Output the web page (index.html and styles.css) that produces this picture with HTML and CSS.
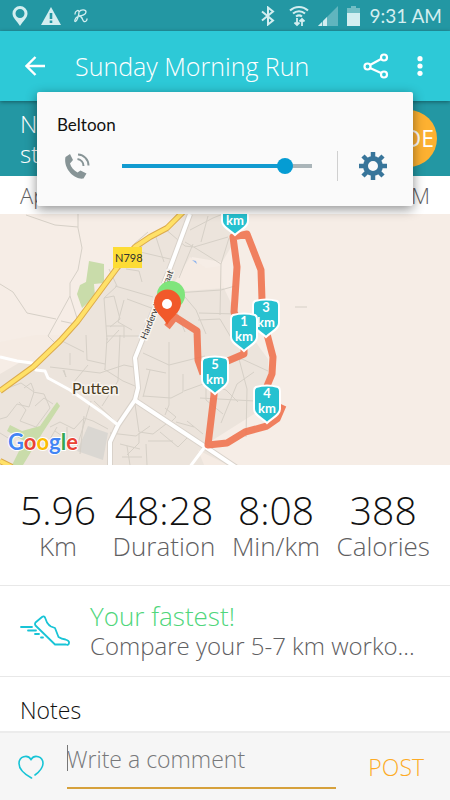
FILE: index.html
```html
<!DOCTYPE html>
<html lang="en">
<head>
  <meta charset="UTF-8">
  <meta name="viewport" content="width=device-width, initial-scale=1.0">
  <title>Sunday Morning Run</title>
  <link rel="stylesheet" href="styles.css">
</head>
<body>

  <!-- status bar -->
  <div class="status-bar">
    <div class="status-icons">
      <svg width="16" height="20" viewBox="0 0 16 20"><path fill="currentColor" fill-rule="evenodd" d="M8 0a7.500 7.500 0 0 0-7.500 7.500C.5 12 5 15 8 20c3-5 7.500-8 7.500-12.500A7.500 7.500 0 0 0 8 0zm0 3a4.500 4.500 0 1 1 0 9 4.500 4.500 0 0 1 0-9z"/></svg>
      <svg width="20" height="18" viewBox="0 0 20 18"><path fill="currentColor" d="M10 0l10 18H0z"/><path stroke="#2397a3" stroke-width="2.600" d="M10 6v6M10 13.500V16"/></svg>
      <svg width="14" height="14" viewBox="0 0 14 14" fill="none" stroke="currentColor" stroke-width="1.300" stroke-linecap="round"><path d="M1 5C1 2 5 0 5 3S3 12 1.500 12.500 1 9 3 8M5 3c2-3 7-2.500 7 0S8 7 5 7c4 0 3 5 5 5.500S13 11 13 10"/></svg>
    </div>
    <div class="status-icons status-right">
      <svg class="bluetooth" width="14" height="20" viewBox="0 0 14 20" fill="none" stroke="currentColor" stroke-width="2"><path d="M1 5.500l11 9-5 4V1.500l5 4-11 9"/></svg>
      <svg width="20" height="22" viewBox="0 0 20 22" fill="none" stroke="currentColor" stroke-width="2"><path d="M1 5.500a13 13 0 0 1 18 0M4 8.500a9 9 0 0 1 12 0M7 11.500a5 5 0 0 1 6 0"/><path stroke-width="1.800" d="M8 13v7M5.500 17.500L8 20l2.500-2.500M13 21v-7M10.500 16.500L13 14l2.500 2.500"/></svg>
      <svg width="20" height="20" viewBox="0 0 20 20" fill="currentColor"><path opacity=".35" d="M20 0v20H0z"/><path d="M9 11v9H5v-5zM4 16v4H0z"/></svg>
      <svg width="13" height="20" viewBox="0 0 13 20" fill="currentColor"><path opacity=".45" d="M4 0h5v2h4v6H0V2h4z"/><path d="M0 7h13v13H0z"/></svg>
      <span class="clock">9:31 AM</span>
    </div>
  </div>

  <header class="app-bar">
    <button class="icon-btn" aria-label="Back">
      <svg width="20" height="20" viewBox="0 0 20 20" fill="none" stroke="currentColor" stroke-width="2.400"><path d="M20 10H2M10.500 1L1.500 10l9 9"/></svg>
    </button>
    <h1>Sunday Morning Run</h1>
    <button class="icon-btn" aria-label="Share">
      <svg width="26" height="26" viewBox="0 0 26 26" fill="none" stroke="currentColor" stroke-width="2.200"><path d="M7 12L18 6M7 15l11 5"/><circle cx="4.500" cy="13.500" r="3"/><circle cx="21" cy="4.500" r="3"/><circle cx="21" cy="21.500" r="3"/></svg>
    </button>
    <button class="icon-btn menu-btn" aria-label="More options">
      <svg width="6" height="20" viewBox="0 0 6 20" fill="currentColor"><circle cx="3" cy="2.700" r="2.600"/><circle cx="3" cy="10" r="2.600"/><circle cx="3" cy="17.300" r="2.600"/></svg>
    </button>
  </header>

  <section class="banner">
    <p>N<br>st</p>
    <div class="avatar">DE</div>
  </section>

  <div class="date-row">
    <span>Ap</span>
    <span>M</span>
  </div>

  <!-- route map -->
  <div class="map">
    <svg viewBox="0 0 450 251" preserveAspectRatio="xMidYMid slice" role="img" aria-label="Route map of Putten">
      <defs>
        <path id="shield" d="M-11-17Q0-20 11-17Q13-16 13-13V5C13 11 5 14 0 19C-5 14-13 11-13 5V-13Q-13-16-11-17Z"/>
      </defs>
      <rect width="450" height="251" fill="#f6ede6"/>
      <path class="urban" d="M140 30L182 0H240L233 30 222 48 192 43 180 70 222 70 238 104 268 145 270 190 205 231 232 251H0V160L60 125 77 108 110 65Z"/>
      <path fill="#f5ebe3" d="M190 43l16 11 14-2 4 22-38 3-12-8zM0 128l35-7 32 0-34 28-33-8zM198 236l30 15h-24z"/>
      <path class="park" d="M89 47l15 3v19l-10 1 1 12-13 12-5-14 3-9 6-3z"/>
      <path class="park" d="M57 188l3 4-17 26-20 33H12l12-24-17-10 3-6 12 6 18-5 14-20z"/>
      <path fill="#dad7d2" d="M88 212l20 7-5 27-26-9z"/>
      <path fill="#8fb5ef" d="M192 46l4 1 1 3z"/>

      <g class="lanes">
        <path d="M26 1l29 10 23 2M78 0v14l4 20-4 22-8 13v13l7 22M70 82L48 122l8 8M0 70l13 8 14 21 29 6M61 107l14 3"/>
        <path d="M134 30l14-12M126 55l13 2 3 11M115 72l38 11M109 55l8 17-13 12 3 42M104 84l10-2 6 23-10 8M124 86l-6 22 14 8M127 85l27 10M106 122h40M106 112h18v12M119 116l-13 14"/>
        <path d="M136 37l34 8M144 24l-8 30M155 20l9 28M164 14l21 18 8 1M193 30l-14 34M190 16l23-12 10-4M185 28l12 7 24 15 8-26M194 33l34-10M221 50l-1 51M175 79l46-3 14-4M199 99l38 1M180 77l16 19 10 24M172 86l13 32M198 106l22-1 13 22M208 2l-7 26"/>
        <path d="M50 153l17 2 33 4 24-8 14 3M60 126l24 12M86 121l1 25 18 4M107 124l-2 31M120 121l-2 46-16 25M70 139v12M104 155l19 12 12 5M88 151l-15 18M64 156l2 7-3-7"/>
        <path d="M8 174l13-5 13 9-5 15-12-3-10 13-7 2M24 174l7-5 3 8M33 178l11 2 6 14-14 19-16-6 6-11-7-8M35 192l9-8 9 6M50 213l10-5 14 7 10-11 9 3 15 8M55 217l20 14M67 213v18M84 202l-4 38M91 187l-14 46M94 187l24 23M50 225l7-12M0 219l13 8M110 219l26 3 14-10"/>
        <path d="M143 139l26 12 36-9M169 128v63l-4 10M146 155l20 4M143 182l28 2 12-6v-18M150 156l-7 27M184 177l22-8 20 7 12 12M206 168v18l17 14M211 150l31-5 26 12M239 145l8 30-1 48M254 158l-17 12-16 39M200 184l55 3M165 194l11 9-7 7M176 208l18 5M187 207l16 13M135 190l4 28 14 2 13-10M146 230l1 21M127 232l3 19M139 219v10l-12 12M148 227h25M160 218l18 15 12-12M120 230l20 5M122 243h20"/>
        <path d="M295 93h12"/>
      </g>

      <g class="street-edge">
        <path d="M190 0L173 46 143 124 135 144 138 174 135 186 118 211 110 228V251"/>
        <path d="M136 187l71 47 30 20"/>
      </g>
      <g class="street">
        <path d="M190 0L173 46 143 124 135 144 138 174 135 186 118 211 110 228V251"/>
        <path d="M136 187l71 47 30 20"/>
        <path class="narrow" d="M0 143l17 4 15 2 4 7 9 1 3 7 22 12 33 23 15 12M204 234l-15 20"/>
      </g>

      <path class="highway-edge" d="M184-3L167 14 150 23 135 33 117 54 77 108 60 127 33 153 0 177M0 247l12 6"/>
      <path class="highway" d="M184-3L167 14 150 23 135 33 117 54 77 108 60 127 33 153 0 177M0 247l12 6"/>

      <rect x="113" y="33" width="29" height="21" fill="#fddc35"/>
      <text class="map-text" x="115" y="48" font-size="11">N798</text>
      <text class="map-text halo" transform="translate(146 126) rotate(-68)" font-size="9">Harderwijkerstraat</text>
      <text class="map-text halo town" x="72" y="180" font-size="16">Putten</text>

      <path class="route" d="M167 113L175 103 197 117 198 146 203 160"/>
      <path class="route" d="M244 120V140L216 152M214 160V181L208 231 227 229 245 218 267 212 277 205 283 191"/>
      <path class="route" d="M267 190V172L272 160 273 143 267 120 262 86 261 56 247 20 233 23 237 53 234 98 243 118"/>

      <circle cx="171" cy="81" r="14" fill="#7fe57c"/>
      <path fill="#f1592a" d="M167 111C164 103 154 99 154 89a13.500 13.500 0 0 1 27 0C181 99 171 103 167 111z"/>
      <circle cx="167" cy="90" r="5" fill="#fff"/>

      <g class="marker" transform="translate(235 2)"><use href="#shield"/><text y="9">km</text></g>
      <g class="marker" transform="translate(266 104)"><use href="#shield"/><text y="-6">3</text><text y="9">km</text></g>
      <g class="marker" transform="translate(244 118)"><use href="#shield"/><text y="-6">1</text><text y="9">km</text></g>
      <g class="marker" transform="translate(267 190)"><use href="#shield"/><text y="-6">4</text><text y="9">km</text></g>
      <g class="marker" transform="translate(215 161)"><use href="#shield"/><text y="-6">5</text><text y="9">km</text></g>

      <text class="google" x="8" y="236"><tspan fill="#4285f4">G</tspan><tspan fill="#ea4335">o</tspan><tspan fill="#fbbc05">o</tspan><tspan fill="#4285f4">g</tspan><tspan fill="#34a853">l</tspan><tspan fill="#ea4335">e</tspan></text>
    </svg>
  </div>

  <section class="stats">
    <div class="stat"><strong>5.96</strong><span>Km</span></div>
    <div class="stat"><strong>48:28</strong><span>Duration</span></div>
    <div class="stat"><strong>8:08</strong><span>Min/km</span></div>
    <div class="stat"><strong>388</strong><span>Calories</span></div>
  </section>

  <a class="compare" href="#">
    <svg width="50" height="32" viewBox="0 0 50 32" fill="none" stroke="#18c4d6" stroke-width="1.800" stroke-linecap="round" stroke-linejoin="round"><path d="M15.500 7.500L22 2q2-1.500 3 .5l2 5q2 3 4 4l4 1.500L38.500 22q3 2 7 2.500 4 1 3.500 3.500T46 29.500H35L15.500 10.500q-1-1.500 0-3z"/><path d="M1 12h11M8 15.500h8M15 19h4M21 22.500h2"/></svg>
    <div class="compare-text">
      <h2>Your fastest!</h2>
      <p>Compare your 5-7 km worko...</p>
    </div>
  </a>

  <section class="notes">
    <h2>Notes</h2>
  </section>

  <form class="comment-bar">
    <button type="button" class="like" aria-label="Like">
      <svg width="26" height="24" viewBox="0 0 26 24" fill="none" stroke="#18c4d6" stroke-width="1.600" stroke-linecap="round"><path d="M13.500 23C8 20 1 14.500 1 8.500 1 1.500 9.500-1 13 4.500 16.500-1 25 1.500 25 8.500c0 4.500-4 8.500-8 11.500"/></svg>
    </button>
    <input type="text" placeholder="Write a comment" aria-label="Write a comment">
    <button type="button" class="post">POST</button>
  </form>

  <!-- call volume popup -->
  <div class="volume-popup">
    <label for="volume">Beltoon</label>
    <div class="volume-row">
      <svg width="26" height="26" viewBox="0 0 26 26"><path fill="#879496" d="M1.500 4L6 1l3 6-3 3.500c1 4 4 7 7.500 9l3-2 6 3-3 5C10 27-1 15 1.500 4z"/><path fill="none" stroke="#879496" stroke-width="2" d="M13.500 6a7 7 0 0 1 6 7M14 1.500a11 11 0 0 1 10.500 11"/></svg>
      <input type="range" id="volume" min="0" max="100" value="89">
      <button class="settings" aria-label="Sound settings">
        <svg width="28" height="28" viewBox="-14 -14 28 28"><g stroke="#38759a" stroke-width="4.500"><path d="M0-14V14M-14 0H14M-10-10L10 10M-10 10L10-10"/></g><circle r="7.500" fill="#fafafa" stroke="#38759a" stroke-width="5"/></svg>
      </button>
    </div>
  </div>

</body>
</html>
```
FILE: styles.css
```css
* {
  box-sizing: border-box;
}

body {
  margin: 0;
  min-height: 100vh;
  display: flex;
  flex-direction: column;
  position: relative;
  background-color: #fff;
  color: #5f6062;
  font-family: "Open Sans", "Noto Sans", sans-serif;
  font-weight: 300;
}

h1, h2, p {
  margin: 0;
  font-weight: 300;
}

svg {
  display: block;
  flex: none;
}

button {
  padding: 0;
  border: none;
  background: none;
  color: inherit;
  font: inherit;
  cursor: pointer;
}

/* status bar */
.status-bar {
  display: flex;
  justify-content: space-between;
  align-items: center;
  height: 31px;
  padding: 0 8px 0 12px;
  background-color: #2397a3;
  color: #d3eef0;
}

.status-icons {
  display: flex;
  align-items: center;
  gap: 13px;
}

.status-right {
  gap: 9px;
}

.bluetooth {
  margin-right: 5px;
}

.clock {
  font-family: Lato, sans-serif;
  font-size: 19px;
  font-weight: 400;
  line-height: 30px;
}

/* app bar */
.app-bar {
  display: flex;
  align-items: center;
  height: 70px;
  padding: 0 27px 0 25px;
  background-color: #2dc9d7;
  color: #fff;
  box-shadow: 0 1px 4px rgba(0, 0, 0, 0.4);
  z-index: 1;
}

.app-bar h1 {
  flex: 1;
  margin-left: 30px;
  font-size: 25px;
  white-space: nowrap;
}

.menu-btn {
  margin-left: 28px;
}

.banner {
  display: flex;
  justify-content: space-between;
  align-items: center;
  height: 75px;
  padding: 0 13px 0 20px;
  background-color: #2397a3;
  color: #fff;
}

.banner p {
  font-size: 24px;
  line-height: 30px;
}

.avatar {
  width: 57px;
  height: 57px;
  padding-right: 3px;
  border-radius: 50%;
  background-color: #fdb131;
  font-size: 23px;
  font-weight: 400;
  line-height: 57px;
  text-align: right;
}

.date-row {
  display: flex;
  justify-content: space-between;
  height: 38px;
  padding: 0 20px;
  font-size: 22px;
  line-height: 38px;
}

/* map */
.map {
  height: 251px;
  overflow: hidden;
}

.map svg {
  width: 100%;
  height: 100%;
}

.urban {
  fill: #ece4dc;
}

.park {
  fill: #c9dcaa;
}

.lanes, .street, .street-edge, .highway, .highway-edge, .route {
  fill: none;
  stroke-linejoin: round;
}

.lanes {
  stroke: #d6d0c7;
  stroke-width: 1;
}

.street-edge {
  stroke: #d9d2ca;
  stroke-width: 6;
}

.street {
  stroke: #fff;
  stroke-width: 4;
}

.narrow {
  stroke-width: 3;
}

.highway-edge {
  stroke: #dcab4c;
  stroke-width: 6;
}

.highway {
  stroke: #ffe168;
  stroke-width: 4;
}

.route {
  stroke: #ef7350;
  stroke-width: 7;
  opacity: 0.9;
}

.map-text {
  fill: #333;
  font-family: Lato, sans-serif;
  font-weight: 400;
}

.halo {
  stroke: #f8f3ee;
  stroke-width: 3;
  paint-order: stroke;
}

.town {
  fill: #4a3d22;
}

.marker {
  fill: #26c1d0;
  stroke: #fff;
  stroke-width: 2;
}

.marker text {
  fill: #fff;
  stroke: none;
  font-family: Lato, sans-serif;
  font-size: 13px;
  font-weight: 700;
  text-anchor: middle;
}

.google {
  font-family: Lato, sans-serif;
  font-size: 22px;
  font-weight: 700;
  stroke: #fff;
  stroke-width: 2;
  paint-order: stroke;
}

/* stats */
.stats {
  display: flex;
  justify-content: space-between;
  height: 121px;
  padding: 22px 20px 0;
  border-bottom: 1px solid #e8e8e8;
}

.stat {
  display: flex;
  flex-direction: column;
  align-items: center;
}

.stat strong {
  color: #111;
  font-size: 39px;
  font-weight: 300;
  line-height: 46px;
}

.stat span {
  font-size: 26px;
  line-height: 26px;
}

.compare {
  display: flex;
  align-items: center;
  gap: 20px;
  height: 91px;
  padding: 0 20px;
  border-bottom: 1px solid #e8e8e8;
  color: inherit;
  text-decoration: none;
}

.compare-text {
  font-size: 24px;
  line-height: 30px;
  white-space: nowrap;
}

.compare h2 {
  color: #4fd67b;
  font-size: 26px;
}

.notes {
  flex: 1;
  padding: 18px 20px 0;
  color: #111;
}

.notes h2 {
  font-size: 23px;
  line-height: 30px;
}

/* comment bar */
.comment-bar {
  display: flex;
  align-items: center;
  height: 69px;
  padding: 0 26px 0 18px;
  border-top: 2px solid #ececec;
  background-color: #f6f6f6;
}

.comment-bar input {
  flex: 1;
  min-width: 0;
  height: 44px;
  margin: 0 32px 0 23px;
  padding: 0 0 14px;
  border: none;
  border-bottom: 2px solid #d6a13c;
  outline: none;
  background: linear-gradient(#777, #777) 0 0 / 1px 26px no-repeat;
  color: #5f6062;
  font: inherit;
  font-size: 23px;
}

.comment-bar input::placeholder {
  color: #77787a;
  opacity: 1;
}

.post {
  color: #fdab25;
  font-size: 23px;
}

/* call volume popup */
.volume-popup {
  position: absolute;
  top: 92px;
  left: 37px;
  right: 37px;
  height: 114px;
  padding: 21px 26px 0 20px;
  border-radius: 2px;
  background-color: #fafafa;
  box-shadow: 0 3px 12px rgba(0, 0, 0, 0.45);
  z-index: 2;
}

.volume-popup label {
  display: block;
  color: #111;
  font-family: Lato, sans-serif;
  font-size: 17px;
  font-weight: 400;
  line-height: 24px;
}

.volume-row {
  display: flex;
  align-items: center;
  margin-top: 14px;
  padding-left: 7px;
}

.volume-row input {
  flex: 1;
  min-width: 0;
  height: 16px;
  margin: 0 25px 0 32px;
  appearance: none;
  background: linear-gradient(to right, #129bd0 86%, #aab5b9 86%) center / 100% 4px no-repeat;
}

.volume-row input::-webkit-slider-thumb {
  appearance: none;
  width: 16px;
  height: 16px;
  border-radius: 50%;
  background-color: #059cd3;
}

.settings {
  padding: 1px 0 1px 21px;
  border-left: 1px solid #d0d0d0;
}
```
